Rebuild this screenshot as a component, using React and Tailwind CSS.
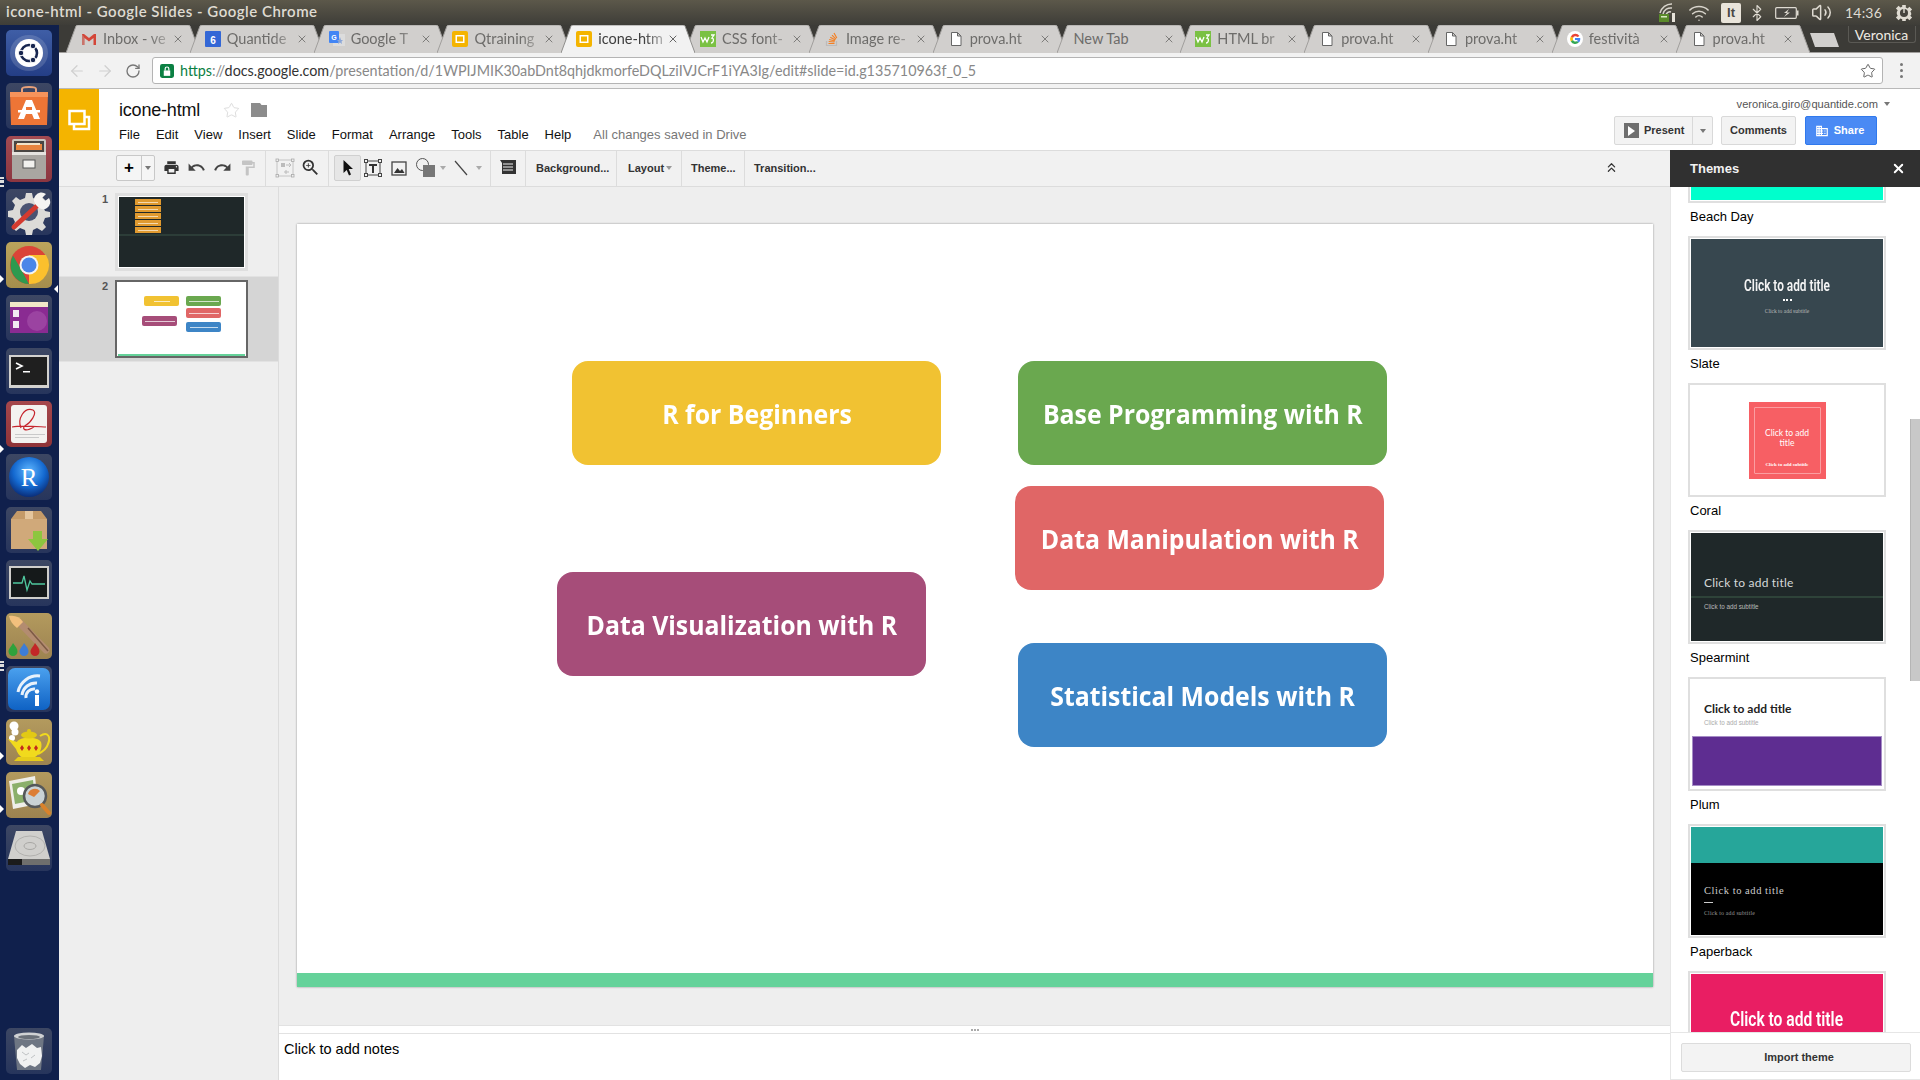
import React from "react";
import { Wifi, Bluetooth, Volume2, Star, X, ArrowLeft, ArrowRight, RotateCw, ChevronsUp } from "lucide-react";
import { MdPrint, MdUndo, MdRedo, MdFormatPaint, MdZoomIn, MdBusiness } from "react-icons/md";

const Caret = ({ c = "border-t-[#777]" }) => (
  <span className={`inline-block w-0 h-0 border-x-[3px] border-x-transparent border-t-[4px] ${c}`} />
);

const SlidesFav = () => (
  <svg width="16" height="16" viewBox="0 0 16 16"><rect width="16" height="16" rx="2" fill="#f4b400" /><rect x="3.5" y="4" width="9" height="8" fill="#fff" /><rect x="5" y="5.5" width="6" height="5" fill="#f4b400" /></svg>
);
const W3 = () => (
  <svg width="16" height="16" viewBox="0 0 16 16"><rect width="16" height="16" fill="#7ac143" /><path d="M1 6l2 5 2-4 2 4 2-5" stroke="#fff" strokeWidth="1.3" fill="none" /><path d="M11 4h3l-2 3c2 0 2 5-1 5" stroke="#fff" strokeWidth="1.3" fill="none" /></svg>
);
const FileIc = () => (
  <svg width="16" height="16" viewBox="0 0 16 16"><path d="M3.5 1.5h6l3.5 3.5v9.5h-9.500z M9.500 1.500v3.500h3.500" fill="#fff" stroke="#666" strokeWidth="1" /></svg>
);
const Gmail = () => (
  <svg width="16" height="16" viewBox="0 0 16 16"><path d="M1 3h2l5 4 5-4h2v11h-2.500V7L8 10.500 3.500 7v7H1z" fill="#d44638" /><path d="M3.500 7v7H1V3z" fill="#b8b8b8" opacity=".4" /></svg>
);
const Cal = () => (
  <svg width="16" height="16" viewBox="0 0 16 16"><rect width="16" height="16" rx="1" fill="#3367d6" /><text x="8" y="13" fontSize="10" fontWeight="700" fill="#fff" textAnchor="middle" fontFamily="Liberation Sans">6</text></svg>
);
const Translate = () => (
  <svg width="16" height="16" viewBox="0 0 16 16"><rect x="4" y="3" width="12" height="12" fill="#dcdcdc" /><rect width="10" height="12" rx="1" fill="#4285f4" /><text x="5" y="9" fontSize="7" fontWeight="700" fill="#fff" textAnchor="middle" fontFamily="Liberation Sans">G</text><path d="M11 6l1 3h2l-1.500 1.500L13 13l-2-1.500L9 13l.5-2.500L8 9h2z" fill="#8aa6d8" /></svg>
);
const Stack = () => (
  <svg width="16" height="16" viewBox="0 0 16 16"><path d="M2.500 10v4.500h10V10" stroke="#bcbbbb" strokeWidth="1.200" fill="none" /><path d="M4.500 12.500h6M4.700 10.500l5.800.5M5.200 8.500l5.700 1.500M6.300 6.300l5 2.800M8 4.200l4 4M10 2l2.800 5" stroke="#f48024" strokeWidth="1.200" /></svg>
);
const GIc = () => (
  <svg width="16" height="16" viewBox="0 0 16 16"><circle cx="8" cy="8" r="8" fill="#fff" /><path d="M12.500 5A5.200 5.200 0 0 0 3.800 5.400L6 7a2.700 2.700 0 0 1 4.500-1z" fill="#ea4335" /><path d="M3.800 5.400a5.200 5.200 0 0 0 0 5.200L6 9a2.700 2.700 0 0 1 0-2z" fill="#fbbc05" /><path d="M3.800 10.600a5.200 5.200 0 0 0 8 1L10 10a2.700 2.700 0 0 1-4-1z" fill="#34a853" /><path d="M13.200 7H8v2h2.800c-.2.500-.4.800-.8 1l1.800 1.600c1.200-1 1.700-2.800 1.400-4.600z" fill="#4285f4" /></svg>
);

const tabs = [
  [Gmail, "Inbox - ve"], [Cal, "Quantide"], [Translate, "Google T"], [SlidesFav, "Qtraining"],
  [SlidesFav, "icone-htm", true], [W3, "CSS font-"], [Stack, "Image re-"], [FileIc, "prova.ht"],
  [null, "New Tab"], [W3, "HTML br"], [FileIc, "prova.ht"], [FileIc, "prova.ht"], [GIc, "festività"], [FileIc, "prova.ht"],
];

function Tab({ Icon, text, active }) {
  return (
    <div className={`relative h-[27px] w-[134px] -ml-[10.200px] shrink-0 flex items-center ${active ? "z-10" : ""}`}>
      <svg width="134" height="28" className="absolute left-0 top-0">
        <path d="M0 28 L10 1 Q10.500 0 12 0 H122 Q123.500 0 124 1 L134 28" fill={active ? "#f2f2f2" : "#d1cfcd"} stroke={active ? "#8f8e8c" : "#a09e9c"} strokeWidth="1" />
      </svg>
      <div className={`relative flex items-center h-full w-full ${Icon ? "pl-[15px]" : "pl-[17px]"}`}>
        {Icon && <span className="w-[16px] h-[16px] mr-[6px] shrink-0"><Icon /></span>}
        <span className={`overflow-hidden whitespace-nowrap text-[14.500px] font-['Lato',sans-serif] ${Icon ? "w-[68px] [mask-image:linear-gradient(to_right,#000_68%,rgba(0,0,0,.25))]" : "w-[90px]"} ${active ? "text-[#3e3e3e]" : "text-[#6d6c6a]"}`}>{text}</span>
      </div>
      <X size={12} strokeWidth={2} className={`absolute left-[106px] top-[8px] ${active ? "text-[#666]" : "text-[#7e7d7b]"}`} />
    </div>
  );
}

function Tile({ tone, children }) {
  const c = {
    blue: "from-[#3f5ea6] to-[#243e86]",
    dark: "from-[#3d4763] to-[#27355c]",
    red: "from-[#a34a52] to-[#8c3640]",
    gold: "from-[#bba45c] to-[#a58d4c]",
    brown: "from-[#b39a5e] to-[#9d8350]",
    rose: "from-[#a5474c] to-[#8f3338]",
  }[tone];
  return (
    <div className={`w-[46px] h-[46px] rounded-[5px] bg-gradient-to-b ${c} flex items-center justify-center shrink-0`}>{children}</div>
  );
}

const I = ({ children }) => <svg width="46" height="46" viewBox="0 0 46 46">{children}</svg>;

const launcher = [
  ["blue", <I key="a"><ellipse cx="23" cy="23" rx="19" ry="18" fill="#fff" opacity=".15" /><circle cx="23" cy="23" r="14" fill="#fff" /><circle cx="23" cy="23" r="8" fill="none" stroke="#18264f" strokeWidth="2.600" /><circle cx="15" cy="23" r="2.800" fill="#18264f" stroke="#fff" /><circle cx="27" cy="16" r="2.800" fill="#18264f" stroke="#fff" /><circle cx="27" cy="30" r="2.800" fill="#18264f" stroke="#fff" /></I>],
  ["dark", <I key="b"><path d="M15 10V6q0-3 8-3t8 3v4h-2V6q0-1-6-1t-6 1v4z" fill="#e9a27b" /><path d="M4 9h38l-1 33H5z" fill="#ed7536" /><path d="M4 9h38v5H4z" fill="#f6935b" /><path d="M20 17h6l8 19h-6l-2-5h-6l-2 5h-6z" fill="#fff" /><rect x="12" y="27" width="22" height="2.500" fill="#fff" /><rect x="20" y="24" width="6" height="3" fill="#ed7536" /></I>],
  ["red", <I key="c"><rect x="6" y="3" width="34" height="40" rx="2" fill="#c9c6c1" /><rect x="8" y="5" width="30" height="11" fill="#4a4643" /><rect x="10" y="8" width="26" height="6" fill="#e9853e" /><rect x="11" y="7" width="23" height="2" fill="#f3e4c8" /><rect x="6" y="16" width="34" height="27" rx="1" fill="#a9a6a1" /><rect x="6" y="16" width="34" height="3" fill="#e5e3df" /><rect x="17" y="24" width="12" height="8" fill="#f2f1ee" stroke="#555" strokeWidth="1" /></I>],
  ["dark", <I key="d"><path d="M20 4h6l1 5 5 2 4-3 4 4-3 5 2 5 5 1v5l-5 1-2 5 3 4-4 4-5-3-4 2-1 5h-6l-1-5-5-2-4 3-4-4 3-5-2-4-5-1v-6l5-1 2-5-3-4 4-4 4 3 5-2z" fill="#dcdbd8" /><circle cx="23" cy="23" r="9" fill="#4a5372" /><path d="M8 38L33 15" stroke="#d43a2f" strokeWidth="5" strokeLinecap="round" /><path d="M31 17a7 7 0 0 1 9-12l-4 4 3 3 4-3a7 7 0 0 1-12 8z" fill="#f5f4f2" /></I>],
  ["gold", <I key="e"><circle cx="23" cy="23" r="19" fill="#db4437" /><path d="M23 42A19 19 0 0 0 40 13H23z" fill="#fbc02d" /><path d="M4.500 23A19 19 0 0 1 7 13.500l9 15.500 7 13a19 19 0 0 1-18.500-19z" fill="#2e9a4f" /><circle cx="23" cy="23" r="9.500" fill="#f3f3f3" /><circle cx="23" cy="23" r="7.500" fill="#4a86e8" /></I>],
  ["dark", <I key="f"><rect x="4" y="7" width="38" height="31" fill="#9c2f9f" /><rect x="4" y="7" width="38" height="5" fill="#f1e7c8" /><rect x="4" y="12" width="38" height="26" fill="#8a2b92" /><ellipse cx="31" cy="26" rx="10" ry="10" fill="#a653ac" opacity=".6" /><rect x="7" y="15" width="6" height="7" fill="#f2eaf2" /><rect x="7" y="26" width="6" height="7" fill="#f2eaf2" /></I>],
  ["dark", <I key="g"><rect x="3" y="7" width="40" height="33" fill="#d3d2cf" /><rect x="5" y="9" width="36" height="28" fill="#1f1f1f" /><path d="M10 15l6 3-6 3" stroke="#fff" strokeWidth="1.600" fill="none" /><rect x="17" y="23" width="7" height="1.500" fill="#fff" /></I>],
  ["rose", <I key="h"><rect x="5" y="4" width="36" height="38" rx="3" fill="#f3f2f0" /><rect x="9" y="33" width="30" height="1" fill="#c9c9c9" /><rect x="9" y="36" width="24" height="1" fill="#c9c9c9" /><path d="M6 26c10-2 30 0 34 0M15 27C11 18 18 6 27 9c5 3-3 13-7 15-5 3-2 8 8 2" stroke="#c6262e" strokeWidth="1.200" fill="none" /></I>],
  ["dark", <I key="i"><defs><radialGradient id="rb" cx=".5" cy=".35" r=".65"><stop offset="0" stopColor="#5eb6ff" /><stop offset=".6" stopColor="#1469d0" /><stop offset="1" stopColor="#0a2e7a" /></radialGradient></defs><circle cx="23" cy="23" r="20" fill="url(#rb)" /><text x="23" y="32" fontSize="25" fill="#fff" textAnchor="middle" fontFamily="Liberation Serif">R</text></I>],
  ["dark", <I key="j"><path d="M5 12l6-8h24l6 8v30H5z" fill="#c49a68" /><path d="M5 12h36v30H5z" fill="#d0a97a" /><path d="M19 4h8v8h-8z" fill="#e4c59d" /><path d="M27 24h9v8h6L32 44 22 32h5z" fill="#8dc63f" /></I>],
  ["dark", <I key="k"><rect x="3" y="6" width="40" height="33" fill="#cfcecb" /><rect x="5" y="8" width="36" height="29" fill="#15191a" /><path d="M7 23h9l2-7 3 14 3-9 2 3h13" stroke="#4fc79e" strokeWidth="1.300" fill="none" /></I>],
  ["brown", <I key="l"><path d="M14 10L40 37" stroke="#b38c70" strokeWidth="7" strokeLinecap="round" /><path d="M22 15L42 38" stroke="#7c5a44" strokeWidth="1.500" /><path d="M3 3c6-1 11 1 14 6l-6 6C7 12 4 8 3 3z" fill="#f2c07d" /><path d="M7 30c3 4 4.500 6 4.500 8.500a4.500 4.500 0 0 1-9 0C2.500 36 5 34 7 30z" fill="#2fa23c" /><path d="M18 30c3 4 4.500 6 4.500 8.500a4.500 4.500 0 0 1-9 0c0-2.500 2.500-4.500 4.500-8.500z" fill="#3d7dd6" /><path d="M29 30c3 4 4.500 6 4.500 8.500a4.500 4.500 0 0 1-9 0c0-2.500 2.500-4.500 4.500-8.500z" fill="#c22727" /></I>],
  ["dark", <svg key="m" width="42" height="42" viewBox="0 0 42 42"><defs><linearGradient id="wf" x1="0" y1="0" x2="0" y2="1"><stop offset="0" stopColor="#4aa0ee" /><stop offset="1" stopColor="#0f62c4" /></linearGradient></defs><rect width="42" height="42" rx="7" fill="url(#wf)" /><path d="M10 24A20 20 0 0 1 32 8M14 27A14 14 0 0 1 29 15M18 30A8 8 0 0 1 27 21" stroke="#e9f2fb" strokeWidth="3" fill="none" /><rect x="27" y="27" width="4" height="11" fill="#fff" /><circle cx="29" cy="23.500" r="2.200" fill="#fff" /></svg>],
  ["brown", <I key="n"><circle cx="8" cy="7" r="4.500" fill="#fff" /><circle cx="9" cy="13" r="3.500" fill="#fff" /><circle cx="6" cy="19" r="3" fill="#fff" /><path d="M34 17c8-5 11 1 8 8-1 4-6 8-10 10" stroke="#f1da1d" strokeWidth="2" fill="none" /><path d="M2 20l9 3c2-5 20-6 24 0 2 6-2 14-8 16H17c-4-2-6-6-7-9z" fill="#f1da1d" /><ellipse cx="23" cy="16" rx="8" ry="3.500" fill="#e2c914" /><circle cx="23" cy="12" r="2" fill="#e2c914" /><path d="M12 38h22l4 4H8z" fill="#e6cc19" /><path d="M16 26l2 3-2 3-2-3zM23 26l2 3-2 3-2-3zM30 26l2 3-2 3-2-3z" fill="#c42a1c" /></I>],
  ["brown", <I key="o"><path d="M3 9l26-5 3 28-25 5z" fill="#efeee8" /><path d="M6 12l21-4 2 20-20 4z" fill="#8bb06b" /><circle cx="15" cy="19" r="4" fill="#fff" /><circle cx="29" cy="24" r="11" fill="#c9d2d5" stroke="#55585a" strokeWidth="2.500" /><path d="M22 22a7 7 0 0 1 12-3l-6 6z" fill="#dc7e36" /><path d="M36 33l7 8" stroke="#d9822b" strokeWidth="4" strokeLinecap="round" /></I>],
  ["dark", <I key="p"><path d="M10 6h26l8 28v6H2v-6z" fill="#d0cfcc" /><path d="M2 34h42v6H2z" fill="#6f6f6d" /><path d="M2 34h14v6H2z" fill="#1b1b1b" /><ellipse cx="24" cy="21" rx="15" ry="10" fill="none" stroke="#b2b1ae" strokeWidth="1" /><ellipse cx="24" cy="21" rx="6" ry="3.500" fill="none" stroke="#a8a7a4" strokeWidth="1" /></I>],
];

const Sep = () => <div className="relative top-[1px] w-px h-[35px] bg-[#dcdcdc] shrink-0" />;

function ToolTxt({ children }) {
  return <span className="text-[11px] leading-[14px] font-bold text-[#333] whitespace-nowrap">{children}</span>;
}

function Thumb({ label, inner, plain }) {
  return (
    <div className="h-[147px] shrink-0">
      <div className={`w-[198px] h-[114px] border-[2px] border-[#dfdfdf] ${plain ? "" : "p-px"} bg-white overflow-hidden`}>{inner}</div>
      <div className="h-[33px] pt-[6px] pl-[2px] text-[13px] leading-[16px] text-black">{label}</div>
    </div>
  );
}

export default function App() {
  return (
    <div className="w-[1920px] h-[1080px] flex flex-col overflow-hidden bg-white font-['Liberation_Sans',sans-serif]">
      <div className="h-[25px] shrink-0 bg-gradient-to-b from-[#5c584a] to-[#3e3d38] flex items-center pl-[6px] pr-[7px] text-[#dfdbd2]">
        <span className="text-[15px] leading-[18px] pb-[3px] font-semibold font-['Lato',sans-serif] tracking-[0.5px] whitespace-nowrap">icone-html - Google Slides - Google Chrome</span>
        <div className="ml-auto flex items-center h-full">
          <svg width="18" height="20" viewBox="0 0 18 20" className="mr-[11px]"><path d="M1 10A12 12 0 0 1 13 1M4 11a8 8 0 0 1 9-6M7 12a4 4 0 0 1 5-3" stroke="#d8d4cb" strokeWidth="1.500" fill="none" /><rect x="13" y="10" width="3" height="9" fill="#e6e2d9" /><rect x="0" y="11" width="10" height="8" fill="#5a8a2a" /><rect x="2" y="13" width="6" height="1.500" fill="#d8e8c0" /></svg>
          <Wifi size={22} strokeWidth={1.600} className="text-[#d8d4cb] mr-[11px]" />
          <div className="w-[20px] h-[20px] rounded-[2px] bg-[#e9e4da] text-[#4a4843] text-[13px] font-bold flex items-center justify-center mr-[7px]">It</div>
          <Bluetooth size={18} strokeWidth={1.500} className="text-[#dfdbd2] mr-[9px]" />
          <svg width="24" height="12" viewBox="0 0 24 12" className="mr-[12px]"><rect x=".7" y=".7" width="20.600" height="10.600" rx="1" fill="#4a4843" stroke="#dfdbd2" strokeWidth="1.200" /><rect x="22" y="3.500" width="1.500" height="5" fill="#dfdbd2" /><path d="M14 2L9 6h3l-3 4 6-4.500h-3z" fill="#dfdbd2" /></svg>
          <Volume2 size={21} strokeWidth={1.700} className="text-[#dfdbd2] mr-[13px]" />
          <span className="text-[14px] font-['Lato',sans-serif] tracking-[0.2px] mr-[13px]">14:36</span>
          <svg width="18" height="18" viewBox="0 0 20 20"><path d="M8 1h4v3l2 1 2-2 3 3-2 2 1 2h0v2l-1 1 2 2-3 3-2-2-2 1v2H8v-2l-2-1-2 2-3-3 2-2-1-2v-2h0l1-2-2-2 3-3 2 2 2-1z" fill="#dfdbd2" /><circle cx="10" cy="10" r="4.500" fill="#46443e" /><rect x="9.200" y="4" width="1.600" height="6" fill="#dfdbd2" /></svg>
        </div>
      </div>

      <div className="flex-1 flex min-h-0">
        <div className="relative w-[59px] shrink-0 bg-[#10204c] flex flex-col items-start pl-[6px] pt-[5px] pb-[6px] gap-[7px]">
          {launcher.map(([t, ic], i) => <Tile key={i} tone={t}>{ic}</Tile>)}
          <div className="mt-auto">
            <Tile tone="dark"><I><path d="M8 8h30l-3 34H11z" fill="#7d838c" opacity=".8" /><ellipse cx="23" cy="8" rx="15" ry="3.500" fill="#cfd1d3" /><ellipse cx="23" cy="9" rx="11" ry="2" fill="#6a7079" /><path d="M11 22l5-5 4 3 6-4 5 4 4-1 1 9-2 7-5 4-5-2-5 3-5-4-3-6z" fill="#f0f1f1" /><path d="M16 24l4 3 3-2M25 30l4-3M17 33l4-2" stroke="#bfc2c4" fill="none" /></I></Tile>
          </div>
          <span className="absolute left-0 top-[250px] w-0 h-0 border-y-[4px] border-y-transparent border-l-[4px] border-l-white" />
          <span className="absolute left-[54px] top-[260px] w-0 h-0 border-y-[4px] border-y-transparent border-r-[4px] border-r-white" />
          <span className="absolute left-0 top-[420px] w-0 h-0 border-y-[4px] border-y-transparent border-l-[4px] border-l-white" />
          <span className="absolute left-0 top-[727px] w-0 h-0 border-y-[4px] border-y-transparent border-l-[4px] border-l-white" />
          <span className="absolute left-0 top-[780px] w-0 h-0 border-y-[4px] border-y-transparent border-l-[4px] border-l-white" />
          <span className="absolute left-0 top-[152px] w-[4px] h-[10px] border-y-[2px] border-[#ddd] bg-[linear-gradient(#10204c_20%,#ddd_20%,#ddd_60%,#10204c_60%)]" />
          <span className="absolute left-0 top-[636px] w-[4px] h-[10px] border-y-[2px] border-[#ddd] bg-[linear-gradient(#10204c_20%,#ddd_20%,#ddd_60%,#10204c_60%)]" />
        </div>

        <div className="flex-1 min-w-0 flex flex-col">
          <div className="relative z-10 h-[27px] shrink-0 bg-[#3c3b37] flex pl-[17.200px]">
            {tabs.map(([Ic, t, a], i) => <Tab key={i} Icon={Ic} text={t} active={a} />)}
            <svg width="32" height="16" viewBox="0 0 32 16" className="-ml-[2px] mt-[7px] shrink-0"><path d="M2 1h24l5 14H7z" fill="#d1cfcd" /></svg>
            <div className="ml-[8px] mt-[1px] w-[68px] h-[17px] rounded-b-[3px] border border-t-0 border-[#5a5954] text-[#efebe3] text-[14px] leading-[17px] text-center font-['Lato',sans-serif]">Veronica</div>
          </div>

          <div className="h-[37px] shrink-0 bg-[#f2f2f2] border-t border-[#a09e9c] border-b border-b-[#b9b9b9] flex items-center">
            <ArrowLeft size={18} strokeWidth={1.600} className="ml-[9px] text-[#cfcfcf]" />
            <ArrowRight size={18} strokeWidth={1.600} className="ml-[10px] text-[#cfcfcf]" />
            <RotateCw size={16} strokeWidth={2} className="ml-[11px] text-[#777]" />
            <div className="ml-[11px] w-[1731px] h-[27px] bg-white border border-[#b4b4b4] rounded-[3px] flex items-center pl-[7px] pr-[6px]">
              <svg width="14" height="14" viewBox="0 0 13 13" className="mr-[6px]"><rect width="13" height="13" rx="2" fill="#0b8043" /><rect x="3.500" y="6" width="6" height="5" fill="#fff" /><path d="M4.800 6V4.500a1.700 1.700 0 0 1 3.400 0V6" stroke="#fff" strokeWidth="1.100" fill="none" /></svg>
              <span className="text-[14.330px] font-['Lato',sans-serif] whitespace-nowrap text-[#888]"><span className="text-[#0b8043]">https</span>://<span className="text-[#333]">docs.google.com</span>/presentation/d/1WPIJMIK30abDnt8qhjdkmorfeDQLziIVJCrF1iYA3Ig/edit#slide=id.g135710963f_0_5</span>
              <Star size={16} strokeWidth={1.500} className="ml-auto text-[#666]" />
            </div>
            <div className="ml-[17px] flex flex-col gap-[3px]">
              <span className="w-[3px] h-[3px] rounded-full bg-[#777]" /><span className="w-[3px] h-[3px] rounded-full bg-[#777]" /><span className="w-[3px] h-[3px] rounded-full bg-[#777]" />
            </div>
          </div>

          <div className="h-[61px] shrink-0 flex bg-white">
            <div className="w-[40px] bg-[#f4b400] flex items-center justify-center shrink-0">
              <svg width="24" height="24" viewBox="0 0 24 24"><path d="M2.500 3h15v13h-15z" fill="none" stroke="#fff" strokeWidth="2.500" /><path d="M7 16v5h15V9h-4.500" fill="none" stroke="#fff" strokeWidth="2.500" /></svg>
            </div>
            <div className="pl-[20px] pt-[9px] flex-1">
              <div className="flex items-center h-[24px]">
                <span className="text-[18px] text-[#111] tracking-[-0.2px]">icone-html</span>
                <Star size={17} strokeWidth={1} className="ml-[23px] text-[#cfcfcf]" />
                <svg width="16" height="14" viewBox="0 0 16 14" className="ml-[11px]"><path d="M0 0h9l1.500 2H16v12H0z" fill="#8c8c8c" /></svg>
              </div>
              <div className="mt-[5px] flex items-center gap-[16px] text-[13px] leading-[16px] text-[#111]">
                {["File", "Edit", "View", "Insert", "Slide", "Format", "Arrange", "Tools", "Table", "Help"].map((m) => <span key={m}>{m}</span>)}
                <span className="ml-[6px] text-[#777]">All changes saved in Drive</span>
              </div>
            </div>
            <div className="w-[306px] shrink-0 relative pt-[7px]">
              <div className="flex items-center justify-end pr-[30px] text-[11.100px] leading-[16px] text-[#555] gap-[6px]">
                <span>veronica.giro@quantide.com</span><Caret />
              </div>
              <div className="mt-[4px] flex items-start">
                <div className="flex h-[29px] border border-[#d9d9d9] rounded-[2px] bg-[#f3f3f3]">
                  <div className="w-[78px] flex items-center pl-[9px] gap-[5px] border-r border-[#d9d9d9]">
                    <span className="w-[15px] h-[15px] bg-[#6f6f6f] flex items-center justify-center"><span className="w-0 h-0 border-y-[5px] border-y-transparent border-l-[7px] border-l-white" /></span>
                    <span className="text-[11px] font-bold text-[#333]">Present</span>
                  </div>
                  <div className="w-[19px] flex items-center justify-center"><Caret /></div>
                </div>
                <div className="ml-[8px] w-[75px] h-[29px] border border-[#d9d9d9] rounded-[2px] bg-[#f3f3f3] flex items-center justify-center text-[11px] font-bold text-[#333]">Comments</div>
                <div className="ml-[9px] w-[72px] h-[29px] border border-[#3079ed] rounded-[2px] bg-[#4a8af4] flex items-center justify-center gap-[5px] pr-[3px] text-[11px] font-bold text-white"><MdBusiness size={14} />Share</div>
              </div>
            </div>
          </div>

          <div className="flex-1 min-h-0 flex">
            <div className="flex-1 min-w-0 flex flex-col">
              <div className="h-[37px] shrink-0 bg-[#f1f1f1] border-y border-[#dcdcdc] pb-[2px] flex items-center text-[#444]">
                <div className="ml-[57px] w-[39px] h-[26px] border border-[#c8c8c8] rounded-[2px] flex items-center bg-[#f5f5f5]">
                  <span className="w-[24px] text-center text-[17px] leading-[20px] font-bold text-black">+</span>
                  <span className="w-px h-full bg-[#c8c8c8]" />
                  <span className="flex-1 flex justify-center"><Caret /></span>
                </div>
                <MdPrint size={17} className="ml-[8px] text-[#333]" />
                <MdUndo size={19} className="ml-[7px] text-[#444]" />
                <MdRedo size={19} className="ml-[7px] text-[#444]" />
                <MdFormatPaint size={18} className="ml-[7px] text-[#c4c4c4]" />
                <div className="ml-[8px]"><Sep /></div>
                <svg width="20" height="20" viewBox="0 0 20 20" className="ml-[9px]"><rect x="2" y="2" width="16" height="16" fill="none" stroke="#c4c4c4" /><rect x="1" y="1" width="2.500" height="2.500" fill="#f1f1f1" stroke="#aaa" strokeWidth=".8" /><rect x="16.500" y="1" width="2.500" height="2.500" fill="#f1f1f1" stroke="#aaa" strokeWidth=".8" /><rect x="1" y="16.500" width="2.500" height="2.500" fill="#f1f1f1" stroke="#aaa" strokeWidth=".8" /><rect x="16.500" y="16.500" width="2.500" height="2.500" fill="#f1f1f1" stroke="#aaa" strokeWidth=".8" /><rect x="6" y="5" width="4" height="4" fill="#bbb" /><path d="M11 7h5M14 5l2 2-2 2M9 14h5M11 12v4" stroke="#bbb" fill="none" /></svg>
                <MdZoomIn size={21} className="ml-[5px] text-[#333]" />
                <div className="ml-[7px]"><Sep /></div>
                <div className="ml-[5px] w-[27px] h-[26px] rounded-[2px] bg-[#e6e6e6] border border-[#d0d0d0] flex items-center justify-center">
                  <svg width="12" height="18" viewBox="0 0 12 18"><path d="M1.500 1v13l3.200-3 2.300 5.500 2-1L6.700 10h4.300z" fill="#111" /></svg>
                </div>
                <svg width="18" height="18" viewBox="0 0 18 18" className="ml-[3px]"><rect x="2" y="2" width="14" height="14" fill="none" stroke="#444" /><path d="M5 5h8v2h-3v7H8V7H5z" fill="#333" /><rect x=".5" y=".5" width="3" height="3" fill="#f1f1f1" stroke="#444" /><rect x="14.500" y=".5" width="3" height="3" fill="#f1f1f1" stroke="#444" /><rect x=".5" y="14.500" width="3" height="3" fill="#f1f1f1" stroke="#444" /><rect x="14.500" y="14.500" width="3" height="3" fill="#f1f1f1" stroke="#444" /></svg>
                <svg width="16" height="16" viewBox="0 0 16 16" className="ml-[9px]"><rect x="1" y="2" width="14" height="13" fill="none" stroke="#444" strokeWidth="1.300" /><path d="M3 13l3.500-5 2.500 3 2-2 2.500 4z" fill="#333" /></svg>
                <svg width="22" height="20" viewBox="0 0 22 20" className="ml-[9px]"><circle cx="6.500" cy="6.500" r="6" fill="none" stroke="#555" /><rect x="7" y="7" width="12" height="12" fill="#777" /></svg>
                <span className="ml-[2px] flex"><Caret c="border-t-[#aaa]" /></span>
                <svg width="16" height="18" viewBox="0 0 16 18" className="ml-[7px]"><path d="M2 2l12 14" stroke="#444" strokeWidth="1.200" /></svg>
                <span className="ml-[7px] flex"><Caret c="border-t-[#aaa]" /></span>
                <div className="ml-[8px]"><Sep /></div>
                <svg width="16" height="16" viewBox="0 0 16 16" className="ml-[9px]"><path d="M0 0h16v14H4l-2 0V3z" fill="#333" /><path d="M3 4h10M3 7h10M3 10h10" stroke="#f1f1f1" /></svg>
                <div className="ml-[9px]"><Sep /></div>
                <div className="ml-[10px] w-[80px] flex items-center"><ToolTxt>Background...</ToolTxt></div>
                <Sep />
                <div className="ml-[11px] w-[53px] flex items-center gap-[2px]"><ToolTxt>Layout</ToolTxt><Caret c="border-t-[#999]" /></div>
                <Sep />
                <div className="ml-[9px] w-[53px] flex items-center"><ToolTxt>Theme...</ToolTxt></div>
                <Sep />
                <div className="ml-[9px] flex items-center"><ToolTxt>Transition...</ToolTxt></div>
                <ChevronsUp size={15} strokeWidth={2} className="ml-auto mr-[51px] text-[#333]" />
              </div>

              <div className="flex-1 min-h-0 flex">
                <div className="w-[220px] shrink-0 bg-[#eeeeee] border-r border-[#dcdcdc] pt-[6px]">
                  <div className="flex h-[83px] pl-[43px]">
                    <span className="w-[13px] text-[11px] font-bold text-[#555] leading-[12px]">1</span>
                    <div className="w-[133px] h-[78px] border-[3px] border-[#dfdfdf] bg-white p-px">
                      <div className="w-full h-full bg-[#1f2829] pt-[2px] flex flex-col">
                        <div className="ml-[16px] w-[26px] flex flex-col gap-px">
                          {[0, 1, 2, 3, 4].map((i) => <div key={i} className="h-[6px] bg-[#e09a2f] flex items-center justify-center"><span className="w-[20px] h-px bg-[#f5d9ae]" /></div>)}
                        </div>
                        <div className="mt-[1px] h-[2px] bg-[#2c3d38]" />
                      </div>
                    </div>
                  </div>
                  <div className="h-[86px] bg-[#d5d5d5] flex pl-[43px] pt-[3px] border-y border-[#e2e2e2]">
                    <span className="w-[13px] text-[11px] font-bold text-[#555] leading-[12px]">2</span>
                    <div className="relative w-[133px] h-[78px] border-[2px] border-[#666] bg-white">
                      {[
                        ["left-[27px] top-[14px] bg-[#f1c232]", "w-[16px]"],
                        ["left-[69px] top-[14px] bg-[#6aa84f]", "w-[30px]"],
                        ["left-[69px] top-[26px] bg-[#e06666]", "w-[30px]"],
                        ["left-[25px] top-[34px] bg-[#a64d79]", "w-[30px]"],
                        ["left-[69px] top-[40px] bg-[#3d85c6]", "w-[28px]"],
                      ].map(([c, w]) => (
                        <div key={c} className={`absolute w-[35px] h-[10px] rounded-[2px] flex items-center justify-center ${c}`}><span className={`h-px bg-white/70 ${w}`} /></div>
                      ))}
                      <div className="absolute left-[1px] right-[1px] top-[72px] h-[1.500px] bg-[#65d29a]" />
                    </div>
                  </div>
                </div>

                <div className="flex-1 min-w-0 flex flex-col">
                  <div className="flex-1 min-h-0 bg-[#eeeeee] pl-[18px] pt-[37px]">
                    <div className="relative w-[1356px] h-[763px] bg-white shadow-[0_0_2px_rgba(0,0,0,.4)] flex flex-col justify-end">
                      <div className="h-[14px] bg-[#65d29a]" />
                      {[
                        ["left-[275px] top-[137px] bg-[#f1c232]", "R for Beginners"],
                        ["left-[721px] top-[137px] bg-[#6aa84f]", "Base Programming with R"],
                        ["left-[718px] top-[262px] bg-[#e06666]", "Data Manipulation with R"],
                        ["left-[260px] top-[348px] bg-[#a64d79]", "Data Visualization with R"],
                        ["left-[721px] top-[419px] bg-[#3d85c6]", "Statistical Models with R"],
                      ].map(([c, t]) => (
                        <div key={t} className={`absolute w-[369px] h-[104px] rounded-[16px] flex items-center justify-center pt-[1px] text-white ${c}`}>
                          <span className="text-[27px] font-bold leading-[36px] font-['Open_Sans',sans-serif] whitespace-nowrap scale-x-[.92]">{t}</span>
                        </div>
                      ))}
                    </div>
                  </div>
                  <div className="h-[9px] shrink-0 border-y border-[#e2e2e2] bg-white flex items-center justify-center gap-px">
                    <span className="w-[2px] h-[2px] bg-[#aaa]" /><span className="w-[2px] h-[2px] bg-[#aaa]" /><span className="w-[2px] h-[2px] bg-[#aaa]" />
                  </div>
                  <div className="h-[46px] shrink-0 bg-white pl-[5px] pt-[7px] text-[14.500px] leading-[16px] text-black">Click to add notes</div>
                </div>
              </div>
            </div>

            <div className="w-[250px] shrink-0 flex flex-col border-l border-[#e6e6e6] border-b">
              <div className="h-[37px] shrink-0 -ml-px bg-[#303030] flex items-center justify-between pl-[20px] pr-[14px] text-white">
                <span className="text-[13px] font-bold text-[#f2f2f2]">Themes</span>
                <X size={15} strokeWidth={3} />
              </div>
              <div className="relative flex-1 min-h-0 overflow-hidden pl-[17px]">
                <div className="-mt-[98px]">
                  <Thumb label="Beach Day" inner={<div className="w-full h-full bg-[#00ffcc]" />} />
                  <Thumb label="Slate" inner={
                    <div className="w-full h-full bg-[#37474f] flex flex-col items-center pt-[38px]">
                      <span className="scale-x-[.74] text-[16px] leading-[18px] font-semibold text-[#f4f4f4] whitespace-nowrap font-['Roboto',sans-serif]">Click to add title</span>
                      <span className="mt-[4px] flex gap-[1.500px]"><i className="w-[2px] h-[2px] bg-white" /><i className="w-[2px] h-[2px] bg-white" /><i className="w-[2px] h-[2px] bg-white" /></span>
                      <span className="mt-[7px] text-[5.500px] leading-[7px] text-[#bbb] font-['Liberation_Serif',serif]">Click to add subtitle</span>
                    </div>} />
                  <Thumb plain label="Coral" inner={
                    <div className="w-full h-full flex items-center justify-center">
                      <div className="w-[77px] h-[77px] bg-[#f75f64] p-[5px]">
                        <div className="w-full h-full border border-[#fb9da0] rounded-[1px] flex flex-col items-center text-white text-center pt-[20px]">
                          <span className="text-[8.500px] leading-[10px] font-['Lato',sans-serif]">Click to add<br />title</span>
                          <span className="mt-[13px] text-[5px] leading-[7px] font-bold font-['Liberation_Serif',serif]">Click to add subtitle</span>
                        </div>
                      </div>
                    </div>} />
                  <Thumb label="Spearmint" inner={
                    <div className="w-full h-full bg-[#1f2829] flex flex-col pt-[43px]">
                      <span className="pl-[13px] text-[12px] leading-[14px] text-[#d5d8d8] font-['Lato',sans-serif] tracking-[0.2px]">Click to add title</span>
                      <div className="mt-[6px] h-[1.500px] bg-[#2e4339]" />
                      <span className="mt-[5px] pl-[13px] text-[6.300px] leading-[7px] text-[#bbb]">Click to add subtitle</span>
                    </div>} />
                  <Thumb plain label="Plum" inner={
                    <div className="w-full h-full flex flex-col pt-[22.500px]">
                      <span className="pl-[14px] text-[12px] leading-[13px] font-bold text-[#222] font-['Lato',sans-serif]">Click to add title</span>
                      <span className="mt-[4px] pl-[14px] text-[6.300px] leading-[7px] text-[#aaa]">Click to add subtitle</span>
                      <div className="mt-[10.500px] mx-[2px] h-[50px] border border-[#a58cc6] bg-[#5e2d91]" />
                    </div>} />
                  <Thumb label="Paperback" inner={
                    <div className="w-full h-full bg-black flex flex-col">
                      <div className="h-[36px] bg-[#26a69a] shrink-0" />
                      <span className="mt-[20.500px] pl-[13px] text-[10.500px] leading-[13px] text-[#ccc] font-['Liberation_Serif',serif] tracking-[0.55px]">Click to add title</span>
                      <div className="mt-[5px] ml-[13px] w-[9px] h-px bg-[#ccc]" />
                      <span className="mt-[7px] pl-[13px] text-[5.800px] leading-[7px] text-[#999] font-['Liberation_Serif',serif] tracking-[0.2px]">Click to add subtitle</span>
                    </div>} />
                  <Thumb label="" inner={
                    <div className="w-full h-full bg-[#e91e63] flex flex-col items-center pt-[33px]">
                      <span className="scale-x-[.78] text-[20px] leading-[24px] font-semibold text-white whitespace-nowrap font-['Roboto',sans-serif]">Click to add title</span>
                    </div>} />
                </div>
                <div className="absolute right-0 top-[232px] w-[10px] h-[262px] bg-[#c8c8c8] border-l border-[#b5b5b5]" />
                <div className="absolute left-0 right-0 bottom-0 h-[47px] bg-white border-t border-[#e6e6e6] pl-[10px] pt-[10px]">
                  <div className="w-[230px] h-[29px] pl-[6px] bg-[#f3f3f3] border border-[#dcdcdc] rounded-[2px] flex items-center justify-center text-[11px] font-bold text-[#333]">Import theme</div>
                </div>
              </div>
            </div>
          </div>
        </div>
      </div>
    </div>
  );
}
